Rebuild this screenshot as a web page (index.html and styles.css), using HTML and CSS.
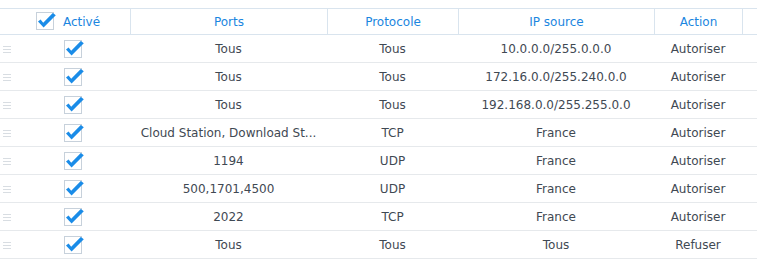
FILE: index.html
```html
<!DOCTYPE html>
<html lang="fr">
<head>
    <meta charset="UTF-8">
    <title>Pare-feu</title>
    <link rel="stylesheet" href="styles.css">
</head>
<body>
    <div class="grid">
        <div class="row head">
            <div class="cell first">
                <span class="check"><svg width="21" height="18" viewBox="0 0 21 18"><rect x="0.5" y="0.5" width="17" height="17" fill="#fff" stroke="#c7d1db"/><path d="M2 9.6 L4.6 7.6 L7.2 10.8 L16.8 1 L19.8 3.2 L7.6 15.6 Z" fill="#1a8ce8"/></svg></span>
                <span>Activé</span>
            </div>
            <div class="cell">Ports</div>
            <div class="cell">Protocole</div>
            <div class="cell">IP source</div>
            <div class="cell">Action</div>
            <div class="cell"></div>
        </div>

        <div class="row">
            <div class="cell first"><span class="grip"></span><span class="check"><svg width="21" height="18" viewBox="0 0 21 18"><rect x="0.5" y="0.5" width="17" height="17" fill="#fff" stroke="#c7d1db"/><path d="M2 9.6 L4.6 7.6 L7.2 10.8 L16.8 1 L19.8 3.2 L7.6 15.6 Z" fill="#1a8ce8"/></svg></span></div>
            <div class="cell">Tous</div>
            <div class="cell">Tous</div>
            <div class="cell">10.0.0.0/255.0.0.0</div>
            <div class="cell">Autoriser</div>
            <div class="cell"></div>
        </div>
        <div class="row">
            <div class="cell first"><span class="grip"></span><span class="check"><svg width="21" height="18" viewBox="0 0 21 18"><rect x="0.5" y="0.5" width="17" height="17" fill="#fff" stroke="#c7d1db"/><path d="M2 9.6 L4.6 7.6 L7.2 10.8 L16.8 1 L19.8 3.2 L7.6 15.6 Z" fill="#1a8ce8"/></svg></span></div>
            <div class="cell">Tous</div>
            <div class="cell">Tous</div>
            <div class="cell">172.16.0.0/255.240.0.0</div>
            <div class="cell">Autoriser</div>
            <div class="cell"></div>
        </div>
        <div class="row">
            <div class="cell first"><span class="grip"></span><span class="check"><svg width="21" height="18" viewBox="0 0 21 18"><rect x="0.5" y="0.5" width="17" height="17" fill="#fff" stroke="#c7d1db"/><path d="M2 9.6 L4.6 7.6 L7.2 10.8 L16.8 1 L19.8 3.2 L7.6 15.6 Z" fill="#1a8ce8"/></svg></span></div>
            <div class="cell">Tous</div>
            <div class="cell">Tous</div>
            <div class="cell">192.168.0.0/255.255.0.0</div>
            <div class="cell">Autoriser</div>
            <div class="cell"></div>
        </div>
        <div class="row">
            <div class="cell first"><span class="grip"></span><span class="check"><svg width="21" height="18" viewBox="0 0 21 18"><rect x="0.5" y="0.5" width="17" height="17" fill="#fff" stroke="#c7d1db"/><path d="M2 9.6 L4.6 7.6 L7.2 10.8 L16.8 1 L19.8 3.2 L7.6 15.6 Z" fill="#1a8ce8"/></svg></span></div>
            <div class="cell">Cloud Station, Download St...</div>
            <div class="cell">TCP</div>
            <div class="cell">France</div>
            <div class="cell">Autoriser</div>
            <div class="cell"></div>
        </div>
        <div class="row">
            <div class="cell first"><span class="grip"></span><span class="check"><svg width="21" height="18" viewBox="0 0 21 18"><rect x="0.5" y="0.5" width="17" height="17" fill="#fff" stroke="#c7d1db"/><path d="M2 9.6 L4.6 7.6 L7.2 10.8 L16.8 1 L19.8 3.2 L7.6 15.6 Z" fill="#1a8ce8"/></svg></span></div>
            <div class="cell">1194</div>
            <div class="cell">UDP</div>
            <div class="cell">France</div>
            <div class="cell">Autoriser</div>
            <div class="cell"></div>
        </div>
        <div class="row">
            <div class="cell first"><span class="grip"></span><span class="check"><svg width="21" height="18" viewBox="0 0 21 18"><rect x="0.5" y="0.5" width="17" height="17" fill="#fff" stroke="#c7d1db"/><path d="M2 9.6 L4.6 7.6 L7.2 10.8 L16.8 1 L19.8 3.2 L7.6 15.6 Z" fill="#1a8ce8"/></svg></span></div>
            <div class="cell">500,1701,4500</div>
            <div class="cell">UDP</div>
            <div class="cell">France</div>
            <div class="cell">Autoriser</div>
            <div class="cell"></div>
        </div>
        <div class="row">
            <div class="cell first"><span class="grip"></span><span class="check"><svg width="21" height="18" viewBox="0 0 21 18"><rect x="0.5" y="0.5" width="17" height="17" fill="#fff" stroke="#c7d1db"/><path d="M2 9.6 L4.6 7.6 L7.2 10.8 L16.8 1 L19.8 3.2 L7.6 15.6 Z" fill="#1a8ce8"/></svg></span></div>
            <div class="cell">2022</div>
            <div class="cell">TCP</div>
            <div class="cell">France</div>
            <div class="cell">Autoriser</div>
            <div class="cell"></div>
        </div>
        <div class="row">
            <div class="cell first"><span class="grip"></span><span class="check"><svg width="21" height="18" viewBox="0 0 21 18"><rect x="0.5" y="0.5" width="17" height="17" fill="#fff" stroke="#c7d1db"/><path d="M2 9.6 L4.6 7.6 L7.2 10.8 L16.8 1 L19.8 3.2 L7.6 15.6 Z" fill="#1a8ce8"/></svg></span></div>
            <div class="cell">Tous</div>
            <div class="cell">Tous</div>
            <div class="cell">Tous</div>
            <div class="cell">Refuser</div>
            <div class="cell"></div>
        </div>
    </div>
</body>
</html>
```

FILE: styles.css
```css
body {
    margin: 0;
    background: #fff;
    font-family: "DejaVu Sans", Verdana, sans-serif;
    font-size: 12px;
    color: #3f4953;
}

.grid {
    padding-top: 8px;
}

.row {
    display: grid;
    grid-template-columns: 130px 197px 131px 196px 88px 1fr;
    height: 27px;
    border-bottom: 1px solid #e6e9ec;
}

.row.head {
    height: 25px;
    border-top: 1px solid #d9e4ee;
    border-bottom: 1px solid #d9e4ee;
    color: #1b86e0;
}

.cell {
    display: flex;
    align-items: center;
    justify-content: center;
    padding: 1px 6px 0;
    white-space: nowrap;
    overflow: hidden;
    min-width: 0;
}

.row .cell.first {
    justify-content: flex-start;
    padding: 1px 0 0 3px;
}

.head .cell {
    padding-top: 0;
    border-left: 1px solid #d9e4ee;
}

.head .cell.first {
    border-left: none;
    padding: 0 0 0 6px;
    justify-content: center;
}

.head .check {
    margin-right: 6px;
    margin-top: -1px;
}

.check {
    display: inline-flex;
    width: 21px;
    height: 18px;
}

.grip {
    width: 8px;
    height: 7px;
    margin-right: 53px;
    background: linear-gradient(#d8dde2, #d8dde2) 0 0 / 8px 1px no-repeat,
                linear-gradient(#d8dde2, #d8dde2) 0 3px / 8px 1px no-repeat,
                linear-gradient(#d8dde2, #d8dde2) 0 6px / 8px 1px no-repeat;
}
```
